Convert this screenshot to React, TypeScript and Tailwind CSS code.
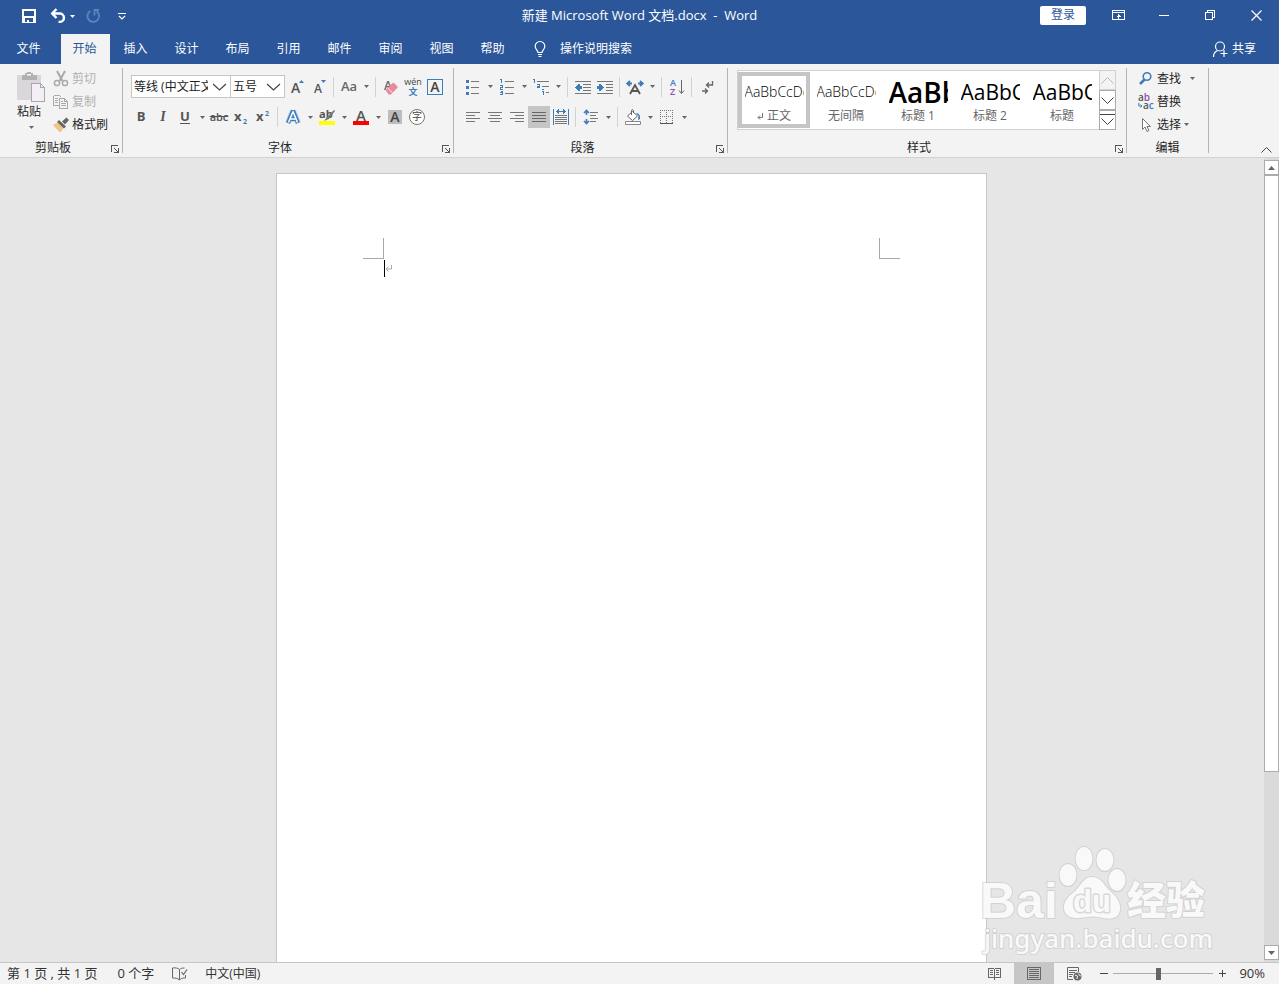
import { useState } from "react";
import type { ReactNode } from "react";

const TABS = ["开始", "插入", "设计", "布局", "引用", "邮件", "审阅", "视图", "帮助"];

const STYLES = [
  { name: "正文", sample: "AaBbCcDd", size: "text-[14px] font-light" },
  { name: "无间隔", sample: "AaBbCcDd", size: "text-[14px] font-light" },
  { name: "标题 1", sample: "AaBbC", size: "text-[28px] font-semibold" },
  { name: "标题 2", sample: "AaBbC", size: "text-[21px]" },
  { name: "标题", sample: "AaBbC", size: "text-[21px]" },
];

interface IconProps {
  w?: number;
  h?: number;
  crisp?: boolean;
  children: ReactNode;
}

function Icon({ w = 16, h = 16, crisp = true, children }: IconProps) {
  return (
    <svg
      width={w}
      height={h}
      viewBox={`0 0 ${w} ${h}`}
      fill="none"
      shapeRendering={crisp ? "crispEdges" : "auto"}
      className="shrink-0 overflow-visible"
      aria-hidden="true"
    >
      {children}
    </svg>
  );
}

function Caret() {
  return (
    <svg width="5" height="3" viewBox="0 0 5 3" className="shrink-0" aria-hidden="true">
      <path d="M0 0h5L2.5 3z" fill="currentColor" />
    </svg>
  );
}

function Tool({ label, active, children }: { label: string; active?: boolean; children: ReactNode }) {
  return (
    <button
      type="button"
      aria-label={label}
      className={`flex h-[22px] w-[22px] shrink-0 items-center justify-center ${active ? "bg-[#c5c5c5]" : ""}`}
    >
      {children}
    </button>
  );
}

// Button with a narrow drop-down arrow next to it
function SplitTool({ label, children }: { label: string; children: ReactNode }) {
  return (
    <div className="flex shrink-0">
      <Tool label={label}>{children}</Tool>
      <button type="button" aria-label={`${label}选项`} className="flex w-3 items-center justify-center text-[#666]">
        <Caret />
      </button>
    </div>
  );
}

function Sep() {
  return <span className="ml-[3px] mr-1 h-5 w-px shrink-0 bg-[#d2d2d2]" />;
}

interface GroupProps {
  title: string;
  width: string;
  launcher?: boolean;
  children: ReactNode;
}

function Group({ title, width, launcher = true, children }: GroupProps) {
  return (
    <section className={`flex shrink-0 ${width}`}>
      <div className="flex min-w-0 flex-1 flex-col">
        <div className="h-[76px]">{children}</div>
        <div className="flex h-4 items-center">
          <h2 className="flex-1 text-center leading-4">{title}</h2>
          {launcher && (
            <button type="button" aria-label={`${title}设置`} className="flex w-4 items-center justify-end pr-[3px] pt-0.5">
              <Icon w={8} h={8}>
                <path d="M0 0h7v1H1v6H0zM3 3h1v1h1v1h1v1h1V3h1v5H3V7h3V6H5V5H4V4H3z" fill="#555" />
              </Icon>
            </button>
          )}
        </div>
      </div>
      <span className="mt-1 h-[85px] w-px bg-[#b4b4b4]" />
    </section>
  );
}

function Combo({ label, value, width }: { label: string; value: string; width: string }) {
  return (
    <div className={`relative -mr-px h-[23px] border border-[#c6c6c6] bg-white ${width}`}>
      <select
        aria-label={label}
        className="block h-full w-full appearance-none bg-transparent pl-0.5 pr-[22px] pt-px text-[#222] outline-none"
      >
        <option>{value}</option>
      </select>
      <span className="pointer-events-none absolute right-[3px] top-[7px]">
        <Icon w={15} h={8} crisp={false}>
          <path d="M1 1l6.5 6L14 1" stroke="#444" strokeWidth="1.2" />
        </Icon>
      </span>
    </div>
  );
}

function TitleBar() {
  return (
    <div className="flex h-[34px] items-start">
      <div className="flex h-8 flex-1 items-center">
        <button type="button" aria-label="保存" className="ml-[21px] flex w-[29px]">
          <Icon>
            <path d="M1 1h14v14H1zM3 3v5h10V3zM4 10v4h2v-2h2v2h4v-4z" fill="#fff" fillRule="evenodd" />
          </Icon>
        </button>
        <button type="button" aria-label="撤消" className="flex w-5">
          <Icon crisp={false}>
            <path d="M6.5 1L2.2 5.5l4.3 4.5M3 5.5h6.500a4.200 4.200 0 0 1 .5 8.400H8.500" stroke="#fff" strokeWidth="2.400" />
          </Icon>
        </button>
        <Caret />
        <button type="button" aria-label="重复" className="ml-[10px] flex w-[33px]">
          <Icon crisp={false}>
            <path d="M5.500 3a5.800 5.800 0 1 0 6 .3M9.500 7.500V2H14" stroke="#6183b9" strokeWidth="1.800" />
          </Icon>
        </button>
        <button type="button" aria-label="自定义快速访问工具栏" className="flex">
          <Icon w={9} h={8} crisp={false}>
            <path d="M0 1.500h8M1 4l3 3 3-3" stroke="#fff" strokeWidth="1.200" />
          </Icon>
        </button>
      </div>
      <h1 className="whitespace-pre text-[13px] leading-[30px]">新建 Microsoft Word 文档.docx  -  Word</h1>
      <div className="flex h-[30px] flex-1 items-center justify-end">
        <button type="button" className="mr-[9px] h-[19px] w-[46px] rounded-xs bg-white leading-4 text-[#2b579a]">
          登录
        </button>
        <button type="button" aria-label="功能区显示选项" className="flex w-[46px] justify-center">
          <Icon w={13} h={10}>
            <path d="M.5.5h12v9H.5zM1 2.5h11M6.5 4v5M4.5 6.5h4M5.5 5.5h2" stroke="#fff" />
          </Icon>
        </button>
        <button type="button" aria-label="最小化" className="flex w-[46px] justify-center">
          <Icon w={10} h={1}>
            <path d="M0 0h10v1H0z" fill="#fff" />
          </Icon>
        </button>
        <button type="button" aria-label="向下还原" className="flex w-[46px] justify-center">
          <Icon w={10} h={10}>
            <path d="M.5 2.5h7v7h-7zM2.5 2.5v-2h7v7h-2" stroke="#fff" />
          </Icon>
        </button>
        <button type="button" aria-label="关闭" className="flex w-[46px] justify-center">
          <Icon w={11} h={11} crisp={false}>
            <path d="M.5.5l10 10M10.500.5l-10 10" stroke="#fff" strokeWidth="1.2" />
          </Icon>
        </button>
      </div>
    </div>
  );
}

function TabBar() {
  const [tab, setTab] = useState("开始");
  return (
    <nav className="flex h-[30px] items-stretch">
      <button type="button" className="w-[61px] pr-1">
        文件
      </button>
      {TABS.map((t) => (
        <button
          key={t}
          type="button"
          onClick={() => setTab(t)}
          className={`mr-0.5 w-[49px] pr-0.5 ${t === tab ? "bg-[#f3f3f3] text-[#2b579a]" : ""}`}
        >
          {t}
        </button>
      ))}
      <label className="ml-3 flex items-center gap-3">
        <Icon w={16} h={18} crisp={false}>
          <path
            d="M6 12.5c0-2-2.8-3-2.8-6.2a4.8 4.8 0 0 1 9.6 0c0 3.2-2.8 4.2-2.8 6.2zM6 14.5h4M6.500 16.500h3"
            stroke="#fff"
            strokeWidth="1.2"
          />
        </Icon>
        <input aria-label="操作说明搜索" placeholder="操作说明搜索" className="w-24 bg-transparent outline-none placeholder:text-white" />
      </label>
      <button type="button" className="ml-auto mr-[23px] flex items-center gap-1">
        <Icon w={16} h={18} crisp={false}>
          <circle cx="8" cy="6.5" r="4.5" stroke="#fff" strokeWidth="1.2" />
          <path d="M5.8 10.5C3 11.5 1.5 13.5 1.5 17M8.500 13.500h7M12 10v7" stroke="#fff" strokeWidth="1.2" />
        </Icon>
        共享
      </button>
    </nav>
  );
}

function ClipboardGroup() {
  return (
    <Group title="剪贴板" width="w-[123px]">
      <div className="flex pl-4 pt-[3px]">
        <button type="button" className="mt-1 flex w-[30px] flex-col items-center">
          <Icon w={30} h={32}>
            <path d="M1 4h24v25H1z" fill="#d9d7da" />
            <path d="M6 4h3V2h2V1h4v1h2v2h4v5H6zM11 3v2h4V3z" fill="#b1b0b3" fillRule="evenodd" />
            <path d="M15.5 12.5h9l4 4v14h-13z" fill="#f4eff6" stroke="#aaa7ac" />
            <path d="M24.5 12.5v4h4" stroke="#aaa7ac" />
          </Icon>
          <span className="-ml-1 mt-px leading-4">粘贴</span>
          <span className="mt-1.5 text-[#666]">
            <Caret />
          </span>
        </button>
        <div className="ml-[7px] flex flex-col">
          <button type="button" disabled className="flex h-[23px] items-center gap-[3px] text-[#b1b1b1]">
            <Icon crisp={false}>
              <path d="M4 0l5.500 10M12 0L6.500 10" stroke="#aaa" strokeWidth="2" />
              <circle cx="4" cy="12" r="2.600" stroke="#aaa" strokeWidth="1.500" />
              <circle cx="12" cy="12" r="2.600" stroke="#aaa" strokeWidth="1.500" />
            </Icon>
            剪切
          </button>
          <button type="button" disabled className="flex h-[23px] items-center gap-[3px] text-[#b1b1b1]">
            <Icon>
              <path d="M.5 1.5h6l2 2M.5 1.5v10h5M2 4.500h3M2 6.500h3M2 8.500h3" stroke="#aaa" />
              <path d="M6.500 4.500h5l3 3v7h-8zM11.500 4.500v3h3M8 9.500h5M8 11.500h5M8 7.500h2" stroke="#aaa" />
            </Icon>
            复制
          </button>
          <button type="button" className="flex h-[23px] items-center gap-[3px]">
            <Icon crisp={false}>
              <path d="M0 7.5L6 5.500l5 5-3.500 5C5 13.500 2 11 0 7.500z" fill="#eec68a" />
              <path d="M6 3l7 6.500-2 2-7-6.500zM9 4.500L13.500.5l2.500 2.500-4 4.500z" fill="#666" />
            </Icon>
            格式刷
          </button>
        </div>
      </div>
    </Group>
  );
}

function FontGroup() {
  return (
    <Group title="字体" width="w-[331px]">
      <div className="mt-[11px] flex h-[23px] items-center pl-2">
        <Combo label="字体" value="等线 (中文正文)" width="w-[100px]" />
        <Combo label="字号" value="五号" width="w-[55px]" />
        <span className="w-0.5" />
        <Tool label="增大字号">
          <Icon crisp={false}>
            <text x="2" y="14" fontSize="14" fontWeight="600" fill="#555">A</text>
            <path d="M10 4l2.500-3L15 4z" fill="#3f7cba" />
          </Icon>
        </Tool>
        <Tool label="减小字号">
          <Icon crisp={false}>
            <text x="3" y="14" fontSize="12" fontWeight="600" fill="#555">A</text>
            <path d="M10 1h5l-2.500 3z" fill="#3f7cba" />
          </Icon>
        </Tool>
        <Sep />
        <SplitTool label="更改大小写">
          <span className="text-[13px] font-semibold text-[#666]">Aa</span>
        </SplitTool>
        <Sep />
        <Tool label="清除所有格式">
          <Icon crisp={false}>
            <text x="1" y="11" fontSize="12" fontWeight="600" fill="#666">A</text>
            <path d="M2.500 11L9 4.500c1-1 1.700-1 2.600 0L14 7c.8.8.8 1.500 0 2.300L8 15.500H5.500z" fill="#e88a9a" />
            <path d="M4.800 9l4.500 4.800" stroke="#f3f3f3" />
          </Icon>
        </Tool>
        <Tool label="拼音指南">
          <Icon w={18} h={18} crisp={false}>
            <text x="9" y="7" fontSize="9" textAnchor="middle" fill="#444">wén</text>
            <text x="9" y="17" fontSize="9" fontWeight="700" textAnchor="middle" fill="#3f7cba">文</text>
          </Icon>
        </Tool>
        <Tool label="字符边框">
          <span className="flex h-4 w-4 items-center justify-center border border-[#3f7cba] text-[14px] font-semibold leading-4 text-[#444]">A</span>
        </Tool>
      </div>
      <div className="mt-2 flex h-[22px] items-center pl-[7px] text-[#555]">
        <Tool label="加粗">
          <b className="text-[13px]">B</b>
        </Tool>
        <Tool label="倾斜">
          <i className="font-['Liberation_Serif',serif] text-[14px] font-bold">I</i>
        </Tool>
        <SplitTool label="下划线">
          <span className="border-b border-[#555] text-[13px] font-bold leading-[13px]">U</span>
        </SplitTool>
        <Tool label="删除线">
          <s className="text-[11px] font-semibold">abc</s>
        </Tool>
        <Tool label="下标">
          <Icon crisp={false}>
            <text x="1" y="12" fontSize="13" fontWeight="700" fill="#555">x</text>
            <text x="10" y="15" fontSize="7" fontWeight="700" fill="#3f7cba">2</text>
          </Icon>
        </Tool>
        <Tool label="上标">
          <Icon crisp={false}>
            <text x="1" y="12" fontSize="13" fontWeight="700" fill="#555">x</text>
            <text x="10" y="7" fontSize="7" fontWeight="700" fill="#3f7cba">2</text>
          </Icon>
        </Tool>
        <Sep />
        <SplitTool label="文本效果">
          <Icon w={18} h={18} crisp={false}>
            <path d="M9 2.500L4 15M9 2.500L14 15M6 11h6" stroke="#b9d3ee" strokeWidth="6" />
            <path d="M9 2.500L4 15M9 2.500L14 15M6 11h6" stroke="#3f7cba" strokeWidth="4" />
            <path d="M9 3.500L4.500 14.500M9 3.500L13.500 14.500M6 11h6" stroke="#fff" strokeWidth="1.500" />
          </Icon>
        </SplitTool>
        <SplitTool label="突出显示">
          <Icon crisp={false}>
            <text x="0" y="9" fontSize="11" fontWeight="700" fill="#555">ab</text>
            <path d="M15 1l1 1-6 8-5 2 3-4z" fill="#777" />
            <path d="M0 12h16v4H0z" fill="#ff0" />
          </Icon>
        </SplitTool>
        <SplitTool label="字体颜色">
          <Icon crisp={false}>
            <text x="8" y="12" fontSize="15" fontWeight="600" textAnchor="middle" fill="#555">A</text>
            <path d="M0 12h16v4H0z" fill="red" />
          </Icon>
        </SplitTool>
        <Tool label="字符底纹">
          <span className="flex h-[14px] w-[14px] items-center justify-center bg-[#bdbdbd] text-[14px] font-semibold leading-[14px] text-[#444]">A</span>
        </Tool>
        <Tool label="带圈字符">
          <span className="flex h-4 w-4 items-center justify-center rounded-full border border-[#777] bg-white text-[10px] text-[#444]">字</span>
        </Tool>
      </div>
    </Group>
  );
}

function ParagraphGroup() {
  return (
    <Group title="段落" width="w-[274px]">
      <div className="mt-[11px] flex h-[23px] items-center pl-2">
        <SplitTool label="项目符号">
          <Icon>
            <path d="M1 1h3v3H1zM1 7h3v3H1zM1 13h3v3H1z" fill="#3f7cba" />
            <path d="M6 2.500h8M6 8.500h8M6 14.500h8" stroke="#777" />
          </Icon>
        </SplitTool>
        <SplitTool label="编号">
          <Icon>
            <path d="M1 0h2v4H2V1H1zM1 6h3v3H2v1h2v1H1V8h2V7H1zM1 12h3v4H1v-1h2v-1H1v-1h2z" fill="#3f7cba" />
            <path d="M6 2.500h9M6 8.500h9M6 14.500h9" stroke="#777" />
          </Icon>
        </SplitTool>
        <SplitTool label="多级列表">
          <Icon w={18} h={16}>
            <path d="M1 0h2v4H2V1H1zM5 5h3v4H5V7h2V6H5zM10 10h2v1h-2zM10 12h2v4h-1v-3h-1z" fill="#3f7cba" />
            <path d="M5 2.500h12M10 7.500h7M14 13.500h3" stroke="#777" />
          </Icon>
        </SplitTool>
        <Sep />
        <Tool label="减少缩进量">
          <Icon>
            <path d="M0 2.500h16M8 5.500h8M8 8.500h8M8 11.500h8M0 14.500h16" stroke="#777" />
            <path d="M0 8h1V7h1V6h1V5h2v2h2v3H5v2H3v-1H2v-1H1V9H0z" fill="#3f7cba" />
          </Icon>
        </Tool>
        <Tool label="增加缩进量">
          <Icon>
            <path d="M0 2.500h16M9 5.500h7M9 8.500h7M9 11.500h7M0 14.500h16" stroke="#777" />
            <path d="M7 8H6V7H5V6H4V5H2v2H0v3h2v2h2v-1h1v-1h1V9h1z" fill="#3f7cba" />
          </Icon>
        </Tool>
        <Sep />
        <SplitTool label="中文版式">
          <Icon w={18} h={16} crisp={false}>
            <path d="M4 15L9 6l5 9M6 12h6" stroke="#555" strokeWidth="1.800" />
            <path d="M1 4.500h5M12 4.500h5M4 2L1.200 4.500 4 7M14 2l2.800 2.500L14 7" stroke="#3f7cba" strokeWidth="1.800" />
          </Icon>
        </SplitTool>
        <Sep />
        <Tool label="排序">
          <Icon crisp={false}>
            <text x="1" y="7" fontSize="9" fontWeight="600" fill="#3f7cba">A</text>
            <text x="1" y="16" fontSize="9" fontWeight="600" fill="#8b4fb0">Z</text>
            <path d="M12.500 1v13M10 11.500l2.500 3 2.500-3" stroke="#666" />
          </Icon>
        </Tool>
        <Sep />
        <Tool label="显示编辑标记">
          <Icon crisp={false}>
            <path d="M13.500 2v4H8M10 3.500L7.500 6l2.500 2.500M3 12h5M6 9.500L8.500 12 6 14.500" stroke="#666" strokeWidth="1.300" />
          </Icon>
        </Tool>
      </div>
      <div className="mt-2 flex h-[22px] items-center pl-2">
        <Tool label="左对齐">
          <Icon w={14} h={12}>
            <path d="M0 1.500h14M0 4.500h9M0 7.500h14M0 10.500h9" stroke="#777" />
          </Icon>
        </Tool>
        <Tool label="居中">
          <Icon w={14} h={12}>
            <path d="M0 1.500h14M2 4.500h10M0 7.500h14M2 10.500h10" stroke="#777" />
          </Icon>
        </Tool>
        <Tool label="右对齐">
          <Icon w={14} h={12}>
            <path d="M0 1.500h14M5 4.500h9M0 7.500h14M5 10.500h9" stroke="#777" />
          </Icon>
        </Tool>
        <Tool label="两端对齐" active>
          <Icon w={14} h={12}>
            <path d="M0 1.500h14M0 4.500h14M0 7.500h14M0 10.500h14" stroke="#666" />
          </Icon>
        </Tool>
        <Tool label="分散对齐">
          <Icon>
            <path d="M.5 0v16M15.500 0v16M3 2.500h10M4.500 1v3M11.500 1v3M5.500 0v5M10.500 0v5" stroke="#3f7cba" />
            <path d="M2 6.500h12M2 8.500h12M2 10.500h12M2 12.500h12M2 14.500h12" stroke="#777" />
          </Icon>
        </Tool>
        <Sep />
        <SplitTool label="行和段落间距">
          <Icon crisp={false}>
            <path d="M3.500 1v5M3.500 10v5M1 4l2.500-2.500L6 4M1 12l2.500 2.500L6 12" stroke="#3f7cba" strokeWidth="1.600" />
            <path d="M7 3.500h8M7 6.500h6M7 9.500h8M7 12.500h6" stroke="#777" />
          </Icon>
        </SplitTool>
        <Sep />
        <SplitTool label="底纹">
          <Icon crisp={false}>
            <path d="M7.500 2.500l5 4.500-5 4.500L2.500 7zM6.500 6V1.500C6.500.3 8.500.3 8.500 2v2" stroke="#666" fill="#fff" />
            <path d="M11 4c3 0 4.500 2.500 4 6l-2 1 .5-4z" fill="#3f7cba" />
            <path d="M.5 12.500h15v3H.5z" fill="#fff" stroke="#888" />
          </Icon>
        </SplitTool>
        <SplitTool label="边框">
          <Icon w={14} h={14}>
            <path d="M0 .5h13M0 6.500h13M.5 0v13M6.500 0v13M12.500 0v13" stroke="#777" strokeDasharray="1 1" />
            <path d="M0 13.500h13" stroke="#555" />
          </Icon>
        </SplitTool>
      </div>
    </Group>
  );
}

function StylesGroup() {
  return (
    <Group title="样式" width="w-[399px]">
      <div className="pl-[9px] pt-1.5">
        <div className="flex h-[60px] w-[379px] border border-[#d1d1d1] bg-white">
          {STYLES.map((s, i) => (
            <button
              key={s.name}
              type="button"
              className={`my-px flex w-[72px] flex-col items-center justify-end border-4 px-[3px] ${i === 0 ? "border-[#c5c5c5]" : "border-transparent"}`}
            >
              <span
                className={`flex h-8 w-[59px] items-center overflow-hidden whitespace-nowrap leading-8 text-black ${s.size}`}
              >
                {s.sample}
              </span>
              <span className="flex items-center gap-1 leading-4 text-[#666]">
                {i === 0 && (
                  <Icon w={6} h={7} crisp={false}>
                    <path d="M5.500 0v4.500H1M3 2.500l-2 2 2 2" stroke="#777" />
                  </Icon>
                )}
                {s.name}
              </span>
            </button>
          ))}
          <div className="-my-px -mr-px ml-auto flex w-[17px] flex-col text-[#444]">
            <button type="button" aria-label="上一行" className="flex flex-1 items-center justify-center border border-[#d1d1d1] bg-[#f3f3f3] text-[#bbb]">
              <Icon w={13} h={7} crisp={false}>
                <path d="M.5 6.500l6-6 6 6" stroke="currentColor" />
              </Icon>
            </button>
            <button type="button" aria-label="下一行" className="flex flex-1 items-center justify-center border border-[#ababab]">
              <Icon w={13} h={7} crisp={false}>
                <path d="M.5.5l6 6 6-6" stroke="currentColor" />
              </Icon>
            </button>
            <button type="button" aria-label="其他样式" className="flex flex-1 items-center justify-center border border-[#ababab]">
              <Icon w={15} h={12} crisp={false}>
                <path d="M0 .5h15M1.500 4.500l6 6 6-6" stroke="currentColor" />
              </Icon>
            </button>
          </div>
        </div>
      </div>
    </Group>
  );
}

function EditingGroup() {
  return (
    <Group title="编辑" width="w-[82px]" launcher={false}>
      <div className="flex flex-col pl-[11px] pt-[3px]">
        <button type="button" className="flex h-[23px] items-center">
          <Icon crisp={false}>
            <circle cx="9" cy="5.500" r="3.800" stroke="#3f7cba" strokeWidth="1.600" />
            <path d="M6.500 8.500L2 13" stroke="#3f7cba" strokeWidth="2.600" />
          </Icon>
          <span className="ml-[3px] mr-[9px]">查找</span>
          <span className="text-[#666]">
            <Caret />
          </span>
        </button>
        <button type="button" className="flex h-[23px] items-center">
          <Icon crisp={false}>
            <text x="0" y="7" fontSize="10" fontWeight="600" fill="#555">
              a<tspan fill="#8b4fb0">b</tspan>
            </text>
            <text x="5" y="15" fontSize="10" fontWeight="600" fill="#555">
              a<tspan fill="#3f7cba">c</tspan>
            </text>
            <path d="M.8 9v3h3M2.500 10.500L4 12l-1.500 1.500" stroke="#3f7cba" />
          </Icon>
          <span className="ml-[3px]">替换</span>
        </button>
        <button type="button" className="flex h-[23px] items-center">
          <Icon crisp={false}>
            <path d="M4.500 1.500v11l2.500-2.500 2 4.500 2-1-2-4h3.500z" fill="#fff" stroke="#777" />
          </Icon>
          <span className="ml-[3px] mr-[3px]">选择</span>
          <span className="text-[#666]">
            <Caret />
          </span>
        </button>
      </div>
    </Group>
  );
}

function CropMark({ side }: { side: "left" | "right" }) {
  return (
    <span className={`h-[21px] w-[21px] border-b border-[#a8a8a8] ${side === "left" ? "border-r" : "border-l"}`} />
  );
}

function Scrollbar() {
  return (
    <div className="flex w-[15px] shrink-0 flex-col bg-[#dadada] py-0.5">
      <button type="button" aria-label="向上滚动" className="flex h-[15px] items-center justify-center border border-[#ababab] bg-white text-[#666]">
        <svg width="7" height="4" viewBox="0 0 7 4" aria-hidden="true">
          <path d="M0 4h7L3.500 0z" fill="currentColor" />
        </svg>
      </button>
      <div className="flex-[597] border border-[#ababab] bg-white" />
      <div className="flex-[173]" />
      <button type="button" aria-label="向下滚动" className="flex h-[15px] items-center justify-center border border-[#ababab] bg-white text-[#666]">
        <svg width="7" height="4" viewBox="0 0 7 4" aria-hidden="true">
          <path d="M0 0h7L3.500 4z" fill="currentColor" />
        </svg>
      </button>
    </div>
  );
}

function Watermark() {
  return (
    <div className="pointer-events-none absolute bottom-0 right-[65px]">
      <svg width="240" height="122" viewBox="0 0 240 122" aria-hidden="true">
        <g fill="#f9f9f9" stroke="#c9c9c9" strokeOpacity="0.7" strokeWidth="2" strokeLinejoin="round" paintOrder="stroke">
          <text x="6" y="78" fontSize="50" fontWeight="700" fontFamily="Liberation Sans">Bai</text>
          <ellipse cx="94" cy="35" rx="8.500" ry="11" />
          <ellipse cx="110" cy="18.500" rx="8.500" ry="11.500" />
          <ellipse cx="131" cy="20" rx="8.500" ry="11" />
          <ellipse cx="143" cy="40" rx="8.500" ry="11" />
          <path d="M118 37c9 0 12 8 18 14 7 6 11 12 10 19-1 8-9 10-16 8-8-2-16-2-24 0-8 1-15-2-16-9-1-8 5-13 11-18 6-6 9-14 17-14z" />
          <text x="153" y="74" fontSize="39" fontWeight="900">经验</text>
          <text x="10" y="108" fontSize="26" fontWeight="500" fontFamily="Noto Sans">jingyan.baidu.com</text>
          <text x="118" y="72" fontSize="31" fontWeight="700" fontFamily="Liberation Sans" textAnchor="middle" strokeWidth="3">
            du
          </text>
        </g>
      </svg>
    </div>
  );
}

function StatusBar() {
  const [zoom, setZoom] = useState(90);
  return (
    <footer className="flex h-[22px] shrink-0 items-center border-t border-[#c6c6c6] bg-[#f3f3f3] pl-[7px] text-[#333]">
      <span className="text-[13px]">第 1 页 , 共 1 页</span>
      <span className="ml-5 text-[13px]">0 个字</span>
      <button type="button" aria-label="校对" className="ml-[18px] flex">
        <Icon w={15} h={14} crisp={false}>
          <path d="M7.500 2.500C6 1 3 .5.500 1v10c2.500 0 5 0 7 2V2.500zM7.500 2.500C8.500 1.500 10 1 12.500 1M7.500 13c1-1.500 3-2 6-2V8" stroke="#666" />
          <path d="M9.500 5l2 2.500L15 2.500" stroke="#666" strokeWidth="1.200" />
        </Icon>
      </button>
      <span className="ml-[18px]">中文(中国)</span>
      <div className="ml-auto flex h-full items-center">
        <button type="button" aria-label="阅读视图" className="flex h-full w-10 items-center justify-center">
          <Icon w={13} h={13}>
            <path d="M.5 1.500h5l1 1 1-1h5v9h-5l-1 1-1-1h-5zM6.500 2v11M2 3.500h3M2 5.500h3M2 7.500h3M8 3.500h3M8 5.500h3M8 7.500h3" stroke="#666" />
          </Icon>
        </button>
        <button type="button" aria-label="页面视图" className="flex h-full w-10 items-center justify-center bg-[#c6c6c6]">
          <Icon w={14} h={13}>
            <path d="M.5.500h13v12H.5zM2 2.500h10M2 4.500h10M2 6.500h10M2 8.500h10M2 10.500h10" stroke="#666" />
          </Icon>
        </button>
        <button type="button" aria-label="Web 版式视图" className="flex h-full w-10 items-center justify-center">
          <Icon w={15} h={14} crisp={false}>
            <path d="M6 12.500H.5V.500h11V5M2 3.500h8M2 5.500h6M2 7.500h4M2 9.500h3" stroke="#666" />
            <circle cx="10.500" cy="9.500" r="4" fill="#666" />
            <path d="M8 8l2.500 1-.5 3M11.500 6.500l1 2 1.500.5" stroke="#f3f3f3" />
          </Icon>
        </button>
        <button type="button" aria-label="缩小" className="ml-1.5 flex">
          <Icon w={8} h={9}>
            <path d="M0 4.500h8" stroke="#444" />
          </Icon>
        </button>
        <input
          type="range"
          aria-label="显示比例"
          min={0}
          max={200}
          value={zoom}
          onChange={(e) => setZoom(Number(e.target.value))}
          className="ml-[5px] h-3 w-[100px] appearance-none bg-[linear-gradient(#ababab,#ababab)] bg-[length:100%_1px] bg-center bg-no-repeat [&::-webkit-slider-thumb]:h-3 [&::-webkit-slider-thumb]:w-[5px] [&::-webkit-slider-thumb]:appearance-none [&::-webkit-slider-thumb]:bg-[#666]"
        />
        <button type="button" aria-label="放大" className="ml-[5px] flex">
          <Icon w={9} h={9}>
            <path d="M1 4.500h7M4.500 1v7" stroke="#444" />
          </Icon>
        </button>
        <span className="ml-3 mr-3.5 text-[13px]">{zoom}%</span>
      </div>
    </footer>
  );
}

export default function App() {
  return (
    <div className="flex h-screen flex-col overflow-hidden bg-[#e6e6e6] font-['Open_Sans','Noto_Sans_CJK_SC',sans-serif] text-xs text-[#262626]">
      <header className="shrink-0 bg-[#2b579a] text-white">
        <TitleBar />
        <TabBar />
      </header>
      <div className="flex h-[94px] shrink-0 border-b border-[#d2d2d2] bg-[#f3f3f3]">
        <ClipboardGroup />
        <FontGroup />
        <ParagraphGroup />
        <StylesGroup />
        <EditingGroup />
        <button type="button" aria-label="折叠功能区" className="ml-auto mr-[7px] flex items-end pb-1">
          <Icon w={11} h={6} crisp={false}>
            <path d="M.5 5.500l5-5 5 5" stroke="#444" />
          </Icon>
        </button>
      </div>
      <div className="relative flex min-h-0 flex-1">
        <main className="flex min-w-0 flex-1 justify-center pr-px pt-[15px]">
          <article className="w-[711px] border border-b-0 border-[#c6c6c6] bg-white pt-16">
            <div className="flex justify-between px-[86px]">
              <CropMark side="left" />
              <CropMark side="right" />
            </div>
            <p className="mt-px flex items-center pl-[107px]">
              <span className="h-[17px] w-px bg-black" />
              <Icon w={8} h={8} crisp={false}>
                <path d="M6.500 0v4H1M3.500 1.500L1 4l2.500 2.500" stroke="#aaa" />
              </Icon>
            </p>
          </article>
        </main>
        <Scrollbar />
        <Watermark />
      </div>
      <StatusBar />
    </div>
  );
}
